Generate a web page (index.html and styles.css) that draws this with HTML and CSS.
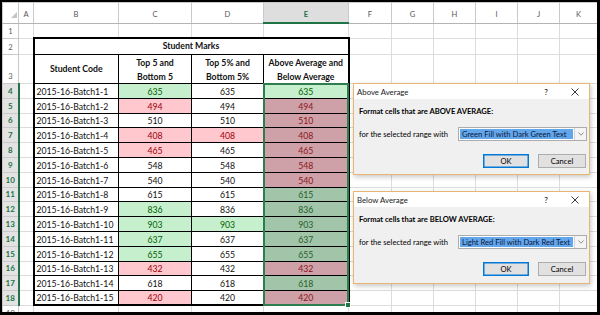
FILE: index.html
```html
<!DOCTYPE html>
<html>
<head>
<meta charset="utf-8">
<link rel="stylesheet" href="styles.css">
</head>
<body>
<div class="screen">
<table class="sheet">
<colgroup>
<col class="c-rh"><col class="c-a"><col class="c-b"><col class="c-c"><col class="c-d"><col class="c-e"><col class="c-f"><col class="c-g"><col class="c-h"><col class="c-i"><col class="c-j"><col class="c-k">
</colgroup>
<tr class="hdr"><th class="corner"><span class="tri"></span></th><th>A</th><th>B</th><th>C</th><th>D</th><th class="csel">E</th><th>F</th><th>G</th><th>H</th><th>I</th><th>J</th><th>K</th></tr>
<tr class="r1"><th class="rh">1</th><td></td><td></td><td></td><td></td><td></td><td></td><td></td><td></td><td></td><td></td><td></td></tr>
<tr class="r2"><th class="rh">2</th><td></td><td class="t title bl br bt" colspan="4">Student Marks</td><td></td><td></td><td></td><td></td><td></td><td></td></tr>
<tr class="r3"><th class="rh">3</th><td></td><td class="t head bl">Student Code</td><td class="t head two">Top 5 and<br>Bottom 5</td><td class="t head two">Top 5% and<br>Bottom 5%</td><td class="t head two br">Above Average and<br>Below Average</td><td></td><td></td><td></td><td></td><td></td><td></td></tr>
<tr class="rd"><th class="rh sel">4</th><td></td><td class="t code bl">2015-16-Batch1-1</td><td class="t num g">635</td><td class="t num">635</td><td class="t num br g active">635<div class="selbox"><span class="handle"></span></div></td><td></td><td></td><td></td><td></td><td></td><td></td></tr>
<tr class="rd"><th class="rh sel">5</th><td></td><td class="t code bl">2015-16-Batch1-2</td><td class="t num r">494</td><td class="t num">494</td><td class="t num br er">494</td><td></td><td></td><td></td><td></td><td></td><td></td></tr>
<tr class="rd"><th class="rh sel">6</th><td></td><td class="t code bl">2015-16-Batch1-3</td><td class="t num">510</td><td class="t num">510</td><td class="t num br er">510</td><td></td><td></td><td></td><td></td><td></td><td></td></tr>
<tr class="rd"><th class="rh sel">7</th><td></td><td class="t code bl">2015-16-Batch1-4</td><td class="t num r">408</td><td class="t num r">408</td><td class="t num br er">408</td><td></td><td></td><td></td><td></td><td></td><td></td></tr>
<tr class="rd"><th class="rh sel">8</th><td></td><td class="t code bl">2015-16-Batch1-5</td><td class="t num r">465</td><td class="t num">465</td><td class="t num br er">465</td><td></td><td></td><td></td><td></td><td></td><td></td></tr>
<tr class="rd"><th class="rh sel">9</th><td></td><td class="t code bl">2015-16-Batch1-6</td><td class="t num">548</td><td class="t num">548</td><td class="t num br er">548</td><td></td><td></td><td></td><td></td><td></td><td></td></tr>
<tr class="rd"><th class="rh sel">10</th><td></td><td class="t code bl">2015-16-Batch1-7</td><td class="t num">540</td><td class="t num">540</td><td class="t num br er">540</td><td></td><td></td><td></td><td></td><td></td><td></td></tr>
<tr class="rd"><th class="rh sel">11</th><td></td><td class="t code bl">2015-16-Batch1-8</td><td class="t num">615</td><td class="t num">615</td><td class="t num br eg">615</td><td></td><td></td><td></td><td></td><td></td><td></td></tr>
<tr class="rd"><th class="rh sel">12</th><td></td><td class="t code bl">2015-16-Batch1-9</td><td class="t num g">836</td><td class="t num">836</td><td class="t num br eg">836</td><td></td><td></td><td></td><td></td><td></td><td></td></tr>
<tr class="rd"><th class="rh sel">13</th><td></td><td class="t code bl">2015-16-Batch1-10</td><td class="t num g">903</td><td class="t num g">903</td><td class="t num br eg">903</td><td></td><td></td><td></td><td></td><td></td><td></td></tr>
<tr class="rd"><th class="rh sel">14</th><td></td><td class="t code bl">2015-16-Batch1-11</td><td class="t num g">637</td><td class="t num">637</td><td class="t num br eg">637</td><td></td><td></td><td></td><td></td><td></td><td></td></tr>
<tr class="rd"><th class="rh sel">15</th><td></td><td class="t code bl">2015-16-Batch1-12</td><td class="t num g">655</td><td class="t num">655</td><td class="t num br eg">655</td><td></td><td></td><td></td><td></td><td></td><td></td></tr>
<tr class="rd"><th class="rh sel">16</th><td></td><td class="t code bl">2015-16-Batch1-13</td><td class="t num r">432</td><td class="t num">432</td><td class="t num br er">432</td><td></td><td></td><td></td><td></td><td></td><td></td></tr>
<tr class="rd"><th class="rh sel">17</th><td></td><td class="t code bl">2015-16-Batch1-14</td><td class="t num">618</td><td class="t num">618</td><td class="t num br eg">618</td><td></td><td></td><td></td><td></td><td></td><td></td></tr>
<tr class="rd"><th class="rh sel">18</th><td></td><td class="t code bl bb">2015-16-Batch1-15</td><td class="t num r bb">420</td><td class="t num bb">420</td><td class="t num br bb er">420</td><td></td><td></td><td></td><td></td><td></td><td></td></tr>
<tr class="r19"><th class="rh"><div class="clip">19</div></th><td></td><td></td><td></td><td></td><td></td><td></td><td></td><td></td><td></td><td></td><td></td></tr>
</table>

<div class="dlg dlg-above">
  <div class="dlg-title"><span class="dlg-name">Above Average</span><span class="dlg-help">?</span><span class="dlg-close"><svg width="8" height="8" viewBox="0 0 8 8"><path d="M0.5 0.5L7.5 7.5M7.5 0.5L0.5 7.5" stroke="#222" stroke-width="0.9" fill="none"/></svg></span></div>
  <div class="dlg-body">
    <div class="dlg-heading">Format cells that are ABOVE AVERAGE:</div>
    <div class="dlg-row"><span>for the selected range with</span><div class="combo"><span class="combo-val">Green Fill with Dark Green Text</span><span class="combo-btn"><svg width="6" height="4" viewBox="0 0 6 4"><path d="M0.5 0.5L3 3.2L5.5 0.5" stroke="#777" stroke-width="0.8" fill="none"/></svg></span></div></div>
    <div class="dlg-btns"><button class="btn btn-default">OK</button><button class="btn btn-cancel">Cancel</button></div>
  </div>
</div>

<div class="dlg dlg-below">
  <div class="dlg-title"><span class="dlg-name">Below Average</span><span class="dlg-help">?</span><span class="dlg-close"><svg width="8" height="8" viewBox="0 0 8 8"><path d="M0.5 0.5L7.5 7.5M7.5 0.5L0.5 7.5" stroke="#222" stroke-width="0.9" fill="none"/></svg></span></div>
  <div class="dlg-body">
    <div class="dlg-heading">Format cells that are BELOW AVERAGE:</div>
    <div class="dlg-row"><span>for the selected range with</span><div class="combo"><span class="combo-val">Light Red Fill with Dark Red Text</span><span class="combo-btn"><svg width="6" height="4" viewBox="0 0 6 4"><path d="M0.5 0.5L3 3.2L5.5 0.5" stroke="#777" stroke-width="0.8" fill="none"/></svg></span></div></div>
    <div class="dlg-btns"><button class="btn btn-default">OK</button><button class="btn btn-cancel">Cancel</button></div>
  </div>
</div>
</div>
</body>
</html>
```
FILE: styles.css
```css
body {
  margin: 0;
  background: #fff;
  font-family: Lato, "Noto Sans", sans-serif;
}
.screen {
  position: relative;
  width: 600px;
  height: 315px;
  box-sizing: border-box;
  border-style: solid;
  border-color: #000;
  border-width: 2px 3px 3px 2px;
  overflow: hidden;
  background: #fff;
}
.sheet {
  border-collapse: collapse;
  table-layout: fixed;
  width: 595px;
  font-size: 8.7px;
  color: #111;
}
.c-rh { width: 16px; }
.c-a { width: 15px; }
.c-b { width: 85px; }
.c-c { width: 73px; }
.c-d { width: 72px; }
.c-e { width: 85px; }
.c-f { width: 43px; }
.c-g { width: 42px; }
.c-h { width: 42px; }
.c-i { width: 42px; }
.c-j { width: 42px; }
.c-k { width: 38px; }

.sheet td, .sheet th {
  padding: 0;
  border: 1px solid #dcdcdc;
  line-height: 10px;
  white-space: nowrap;
}
.sheet th {
  font-weight: normal;
  color: #5a5a5a;
  font-size: 7.6px;
  border-color: #c9c9c9;
  background: #fff;
  text-align: center;
}
.hdr { height: 20.5px; }
.r1 { height: 15px; }
.r2 { height: 16px; }
.r3 { height: 29.5px; }
.rd { height: 14.8px; }
.r19 { height: 7px; }

.hdr th {
  vertical-align: top;
  padding-top: 6px;
  border-bottom-color: #b4b4b4;
}
.corner { position: relative; }
.tri {
  display: block;
  width: 0;
  height: 0;
  margin: 3px 0 0 8px;
  border-left: 6px solid transparent;
  border-bottom: 6px solid #c4c4c4;
}
.hdr th.csel {
  background: #dedede;
  color: #217346;
  font-weight: bold;
  border-bottom: 2px solid #217346;
}
.rh {
  vertical-align: bottom;
  padding-bottom: 2px !important;
}
.rh.sel {
  background: #e3e3e3;
  color: #217346;
  font-weight: bold;
  font-size: 8px;
  border-right: 2px solid #217346;
}
.clip {
  height: 6px;
  overflow: hidden;
  line-height: 14px;
}

.sheet td.t { border: 1px solid #000; }
.sheet td.bl { border-left: 2px solid #000; }
.sheet td.br { border-right: 2px solid #000; }
.sheet td.bt { border-top: 2px solid #000; }
.sheet td.bb { border-bottom: 2px solid #000; }

.title {
  text-align: center;
  font-weight: bold;
  vertical-align: middle;
}
.head {
  text-align: center;
  font-weight: bold;
  vertical-align: middle;
}
.head.two {
  vertical-align: bottom;
  line-height: 13.5px;
}
.code {
  padding-left: 2px !important;
  vertical-align: bottom;
  padding-bottom: 1px !important;
  line-height: 11px;
}
.num {
  text-align: center;
  vertical-align: bottom;
  padding-bottom: 1px !important;
  line-height: 11px;
}
.g { background: #c6efce; color: #006100; }
.r { background: #ffc7ce; color: #9c0006; }
.eg { background: #a2c4a8; color: #245f2a; }
.er { background: #cda1a7; color: #8c1420; }

.active { position: relative; }
.selbox {
  position: absolute;
  left: -1px;
  top: -1px;
  width: calc(100% + 2px);
  height: 223px;
  box-sizing: border-box;
  border: 2px solid #2e7d4f;
  pointer-events: none;
}
.handle {
  position: absolute;
  right: -4px;
  bottom: -4px;
  width: 4px;
  height: 4px;
  background: #217346;
  border: 1px solid #fff;
}

.dlg {
  position: absolute;
  left: 351px;
  width: 237px;
  box-sizing: border-box;
  border: 1px solid #e8b572;
  background: #f0f0f0;
  box-shadow: 1px 2px 5px rgba(0, 0, 0, 0.22);
  font-size: 7.6px;
  color: #000;
  display: flex;
  flex-direction: column;
}
.dlg-above { top: 81px; height: 92px; }
.dlg-below { top: 189px; height: 93px; }
.dlg-title {
  height: 15px;
  flex: none;
  background: #fff;
  display: flex;
  align-items: center;
  padding-left: 3px;
}
.dlg-name { flex: 1; font-size: 7.8px; color: #1a1a1a; }
.dlg-help {
  width: 14px;
  text-align: center;
  margin-right: 14px;
  font-size: 8px;
}
.dlg-close {
  width: 16px;
  margin-right: 6px;
  display: flex;
  justify-content: center;
}
.dlg-body {
  flex: 1;
  padding: 7px 2px 0 5px;
  display: flex;
  flex-direction: column;
}
.dlg-heading {
  font-weight: bold;
  line-height: 10px;
}
.dlg-row {
  margin-top: 11px;
  height: 14px;
  display: flex;
  align-items: center;
}
.combo {
  margin-left: auto;
  width: 129px;
  height: 14px;
  box-sizing: border-box;
  display: flex;
  border: 1px solid #acacac;
  background: #fff;
}
.combo-val {
  flex: 1;
  margin: 1px;
  padding-left: 2px;
  background: #62a6ec;
  color: #0d1838;
  line-height: 10px;
  white-space: nowrap;
  overflow: hidden;
}
.combo-btn {
  width: 11px;
  border-left: 1px solid #d4d4d4;
  background: #f4f4f4;
  display: flex;
  align-items: center;
  justify-content: center;
}
.dlg-btns {
  margin-top: 13px;
  display: flex;
  justify-content: flex-end;
  gap: 9px;
  padding-right: 1px;
}
.btn {
  height: 14px;
  padding: 0;
  font-family: inherit;
  font-size: 7.6px;
  color: #000;
  background: #e1e1e1;
  border: 1px solid #adadad;
}
.btn-default {
  width: 46px;
  border-color: #0078d7;
  box-shadow: inset 0 0 0 0.5px #0078d7;
}
.btn-cancel { width: 48px; }
```
